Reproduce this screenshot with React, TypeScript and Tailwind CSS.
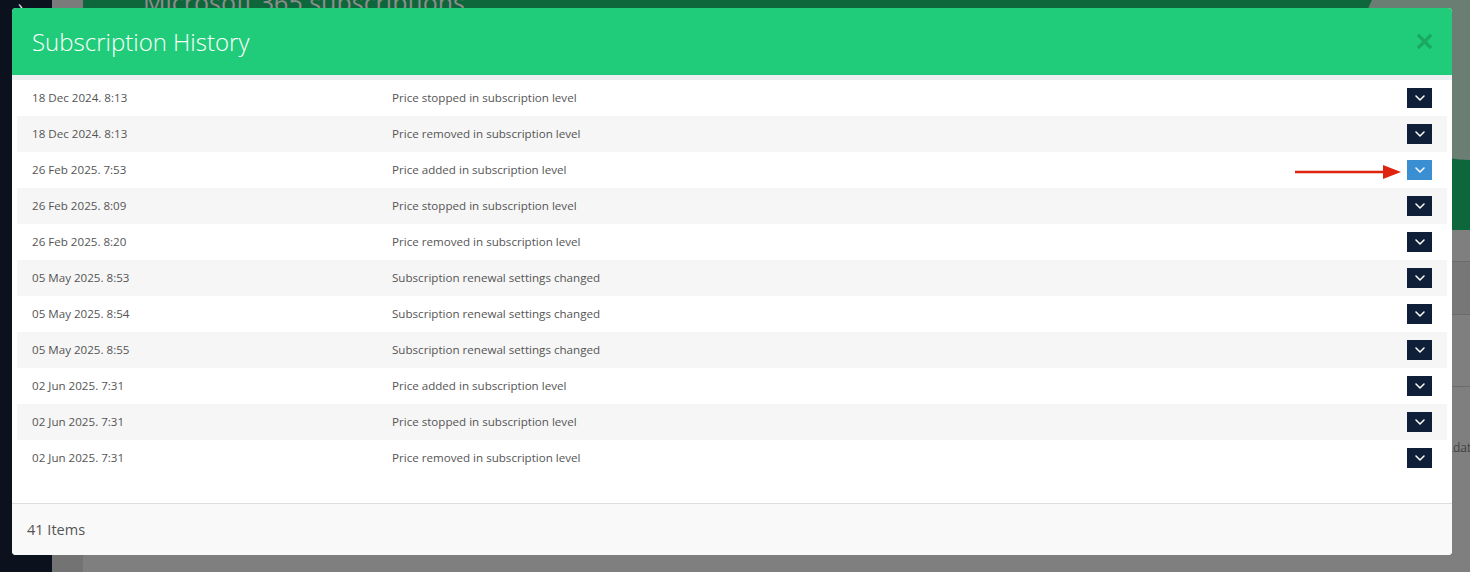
import type React from "react"

const rows = [
  { date: "18 Dec 2024. 8:13", text: "Price stopped in subscription level" },
  { date: "18 Dec 2024. 8:13", text: "Price removed in subscription level" },
  { date: "26 Feb 2025. 7:53", text: "Price added in subscription level", active: true },
  { date: "26 Feb 2025. 8:09", text: "Price stopped in subscription level" },
  { date: "26 Feb 2025. 8:20", text: "Price removed in subscription level" },
  { date: "05 May 2025. 8:53", text: "Subscription renewal settings changed" },
  { date: "05 May 2025. 8:54", text: "Subscription renewal settings changed" },
  { date: "05 May 2025. 8:55", text: "Subscription renewal settings changed" },
  { date: "02 Jun 2025. 7:31", text: "Price added in subscription level" },
  { date: "02 Jun 2025. 7:31", text: "Price stopped in subscription level" },
  { date: "02 Jun 2025. 7:31", text: "Price removed in subscription level" },
]

const Chevron = () => (
  <svg width="10" height="6" viewBox="0 0 10 6" fill="none">
    <path d="M1 1l4 4 4-4" stroke="white" strokeWidth="1.5" strokeLinecap="round" strokeLinejoin="round" />
  </svg>
)

const App: React.FC = () => {
  return (
    <div className="relative h-[572px] w-[1470px] overflow-hidden font-['Open_Sans',sans-serif]">
      {/* page behind the dialog */}
      <div className="flex h-full">
        <div className="w-[52px] bg-[#0b111d] relative">
          <span className="absolute left-[18px] -top-[6px] text-white text-[16px]">›</span>
        </div>
        <div className="flex flex-col w-[31px]">
          <div className="h-[230px] bg-[#7b7b7b]" />
          <div className="flex-1 bg-[#737373]" />
        </div>
        <div className="flex-1 flex flex-col bg-[#7f7f7f]">
          <div className="relative h-[230px] bg-[#0e673a] overflow-hidden">
            <div className="absolute left-[60px] -top-[16px] text-[25px] text-[#8d8d8d]">Microsoft 365 subscriptions</div>
            <div className="absolute right-[-150px] top-[-60px] w-[260px] h-[220px] rounded-full bg-[#6b7e73]" />
          </div>
          <div className="h-[32px] border-b border-[#6b6b6b]" />
          <div className="h-[53px] border-b border-[#6b6b6b] bg-[#777]" />
          <div className="h-[72px] border-b border-[#6b6b6b]" />
          <div className="h-[65px] border-b border-[#6b6b6b] relative">
            <span className="absolute right-[-8px] top-[52px] text-[12px] text-[#444]">date</span>
          </div>
        </div>
      </div>

      {/* dialog */}
      <div className="absolute left-[12px] top-[8px] w-[1440px] rounded-[4px] overflow-hidden flex flex-col bg-white">
        <div className="h-[67px] bg-[#20cc79] flex items-center justify-between px-[20px]">
          <h3 className="text-[24px] font-light text-white">Subscription History</h3>
          <svg width="15" height="15" viewBox="0 0 15 15">
            <path d="M2 2l11 11M13 2L2 13" stroke="#19a962" strokeWidth="3.2" strokeLinecap="square" />
          </svg>
        </div>
        <div className="border-t-[5px] border-[#eceef0] px-[5px] pb-[27px]">
          {rows.map((r, i) => (
            <div
              key={i}
              className={`h-[36px] flex items-center pl-[15px] pr-[15px] text-[11.6px] text-[#555] ${
                i % 2 === 1 ? "bg-[#f6f6f6]" : "bg-white"
              }`}
            >
              <div className="w-[360px]">{r.date}</div>
              <div className="flex-1">{r.text}</div>
              <button
                className={`w-[25px] h-[20px] flex items-center justify-center ${
                  r.active ? "bg-[#3a8fd3]" : "bg-[#0f1f38]"
                }`}
              >
                <Chevron />
              </button>
            </div>
          ))}
        </div>
        <div className="h-[52px] border-t border-[#dedede] bg-[#f9f9f9] flex items-center pl-[15px] text-[14.5px] text-[#555]">
          41 Items
        </div>
      </div>

      {/* red annotation arrow */}
      <svg className="absolute left-[1293px] top-[163px]" width="110" height="18" viewBox="0 0 110 18">
        <path d="M2 9H92" stroke="#e0230f" strokeWidth="2.6" />
        <path d="M90 2L108 9L90 16Z" fill="#e0230f" />
      </svg>
    </div>
  )
}

export default App
